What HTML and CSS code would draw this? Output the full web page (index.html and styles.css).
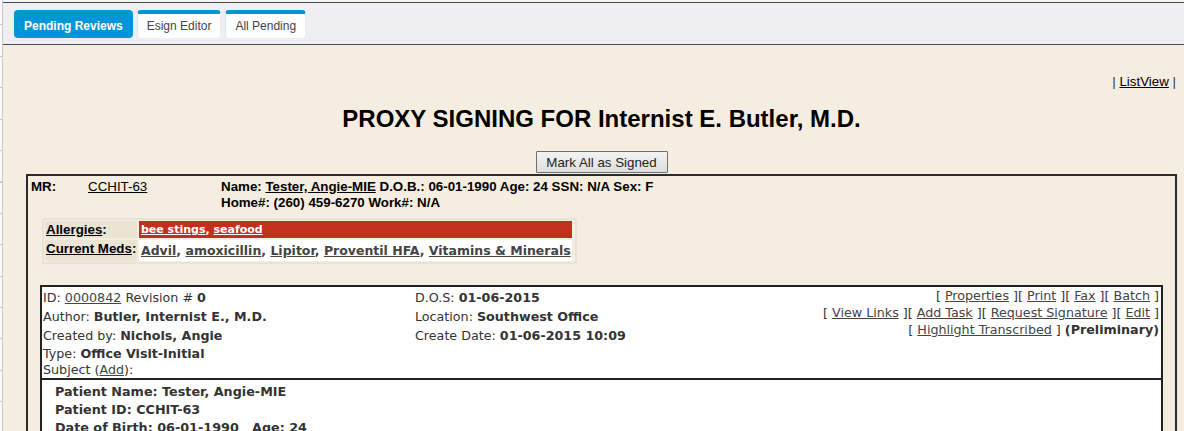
FILE: index.html
```html
<!DOCTYPE html>
<html>
<head>
<meta charset="utf-8">
<title>Pending Reviews</title>
<link rel="stylesheet" href="styles.css">
</head>
<body>
<div class="frame">
  <div class="gutter"></div>
  <div class="main">
    <nav class="tabbar">
      <a class="tab active">Pending Reviews</a>
      <a class="tab">Esign Editor</a>
      <a class="tab">All Pending</a>
    </nav>
    <div class="sheet">
      <div class="viewlinks">| <a class="plain-link">ListView</a> |</div>
      <h1 class="title">PROXY SIGNING FOR Internist E. Butler, M.D.</h1>
      <div class="actions"><button class="btn">Mark All as Signed</button></div>
      <div class="patient-box">
        <div class="demo">
          <b class="demo-label">MR:</b>
          <a class="plain-link mr-link">CCHIT-63</a>
          <div class="demo-name">
            <div>Name: <a class="plain-link">Tester, Angie-MIE</a> D.O.B.: 06-01-1990 Age: 24 SSN: N/A Sex: F</div>
            <div>Home#: (260) 459-6270 Work#: N/A</div>
          </div>
        </div>
        <div class="clinical">
          <div class="clin-label"><a class="plain-link">Allergies</a>:</div>
          <div class="clin-value allergy"><a class="allergy-link">bee stings</a>, <a class="allergy-link">seafood</a></div>
          <div class="clin-label"><a class="plain-link">Current Meds</a>:</div>
          <div class="clin-value meds"><a class="med-link">Advil</a>, <a class="med-link">amoxicillin</a>, <a class="med-link">Lipitor</a>, <a class="med-link">Proventil HFA</a>, <a class="med-link">Vitamins &amp; Minerals</a></div>
        </div>
        <div class="doc">
          <div class="doc-head">
            <div class="col">
              <div class="row">ID: <a class="doc-link">0000842</a> Revision # <b>0</b></div>
              <div class="row">Author: <b>Butler, Internist E., M.D.</b></div>
              <div class="row">Created by: <b>Nichols, Angie</b></div>
              <div class="row row-type">Type: <b>Office Visit-Initial</b></div>
              <div class="row row-subject">Subject (<a class="doc-link">Add</a>):</div>
            </div>
            <div class="col">
              <div class="row">D.O.S: <b>01-06-2015</b></div>
              <div class="row">Location: <b>Southwest Office</b></div>
              <div class="row">Create Date: <b>01-06-2015 10:09</b></div>
            </div>
            <div class="col col-actions">
              <div class="act-row">[ <a class="doc-link">Properties</a> ][ <a class="doc-link">Print</a> ][ <a class="doc-link">Fax</a> ][ <a class="doc-link">Batch</a> ]</div>
              <div class="act-row">[ <a class="doc-link">View Links</a> ][ <a class="doc-link">Add Task</a> ][ <a class="doc-link">Request Signature</a> ][ <a class="doc-link">Edit</a> ]</div>
              <div class="act-row">[ <a class="doc-link">Highlight Transcribed</a> ] <b>(Preliminary)</b></div>
            </div>
          </div>
          <div class="doc-body">
            <div>Patient Name: Tester, Angie-MIE</div>
            <div>Patient ID: CCHIT-63</div>
            <div>Date of Birth: 06-01-1990&nbsp;&nbsp; Age: 24</div>
          </div>
        </div>
      </div>
    </div>
  </div>
</div>
</body>
</html>
```
FILE: styles.css
```css
html, body {
  margin: 0;
  padding: 0;
  height: 100%;
  overflow: hidden;
}
body {
  font-family: "Liberation Sans", Arial, sans-serif;
  font-size: 13.33px;
  color: #000;
  background: #f5eddf;
}
.frame {
  display: flex;
  height: 100vh;
}
.gutter {
  width: 2px;
  flex: none;
  border-right: 1px solid #c9c9c9;
  background-color: #fafafa;
  background-image: repeating-linear-gradient(to bottom, #fafafa 0, #fafafa 24.5px, #c9c9c9 24.5px, #c9c9c9 25.5px, #fafafa 25.5px, #fafafa 31.4px);
}
.main {
  flex: 1;
  min-width: 0;
  background: linear-gradient(#f4f4f4 0, #f4f4f4 2px, #f5eddf 2px);
}
.tabbar {
  margin-top: 2px;
  display: flex;
  gap: 4px;
  padding: 7px 0 6px 11px;
  background: #efeff3;
  border-top: 1px solid #4a4a4a;
  border-bottom: 1px solid #4a4a4a;
}
.tab {
  box-sizing: border-box;
  height: 28px;
  line-height: 24px;
  padding: 0 9px;
  font-size: 12px;
  color: #444;
  background: #fff;
  border-top: 4px solid #0096d6;
  border-left: 1px solid #d6eaf5;
  border-right: 1px solid #e6eef4;
  border-radius: 4px 4px 3px 3px;
}
.tab.active {
  background: #0096d6;
  color: #fff;
  font-weight: bold;
  border-left: 0;
  border-right: 0;
  border-radius: 4px;
  padding: 0 10px;
}
.sheet {
  margin: 0 7px 0 23px;
}
.viewlinks {
  margin-top: 29px;
  line-height: 16px;
  text-align: right;
  padding-right: 1px;
  color: #333;
}
.plain-link {
  color: #000;
  text-decoration: underline;
}
.title {
  margin: 15px 0 0;
  font-size: 24px;
  line-height: 28px;
  font-weight: bold;
  text-align: center;
}
.actions {
  margin-top: 18px;
  display: flex;
  justify-content: center;
}
.btn {
  box-sizing: border-box;
  height: 22px;
  width: 132px;
  padding: 0;
  font-family: "Liberation Sans", Arial, sans-serif;
  font-size: 13.33px;
  color: #222;
  background: linear-gradient(#f3f3f3, #dedede);
  border: 1px solid #707070;
  border-radius: 1px;
}
.patient-box {
  margin-top: 1px;
  border: 2px solid #2b2b2b;
  padding-bottom: 40px;
}
.demo {
  display: grid;
  grid-template-columns: 57px 133px auto;
  padding: 3px 0 0 3px;
  line-height: 16px;
}
.demo-label {
  font-weight: bold;
}
.mr-link {
  justify-self: start;
  align-self: start;
}
.demo-name {
  font-weight: bold;
}
.clinical {
  margin: 7px 0 0 14px;
  width: 529px;
  display: grid;
  grid-template-columns: 92px 433px;
  grid-template-rows: 17px 21px;
  gap: 2px;
  padding: 1px;
  border: 2px solid #e7e3db;
}
.clin-label {
  background: #ebe3d3;
  font-weight: bold;
  line-height: 17px;
  padding-left: 1px;
  white-space: nowrap;
}
.clin-value {
  font-family: "DejaVu Sans", Verdana, sans-serif;
  font-weight: bold;
  padding-left: 2px;
  white-space: nowrap;
  overflow: hidden;
}
.allergy {
  background: #c0301c;
  color: #fff;
  font-size: 11px;
  line-height: 17px;
}
.allergy-link {
  color: #fff;
  text-decoration: underline;
}
.meds {
  background: #fff;
  color: #444;
  font-size: 12.5px;
  line-height: 21px;
}
.med-link {
  color: #444;
  text-decoration: underline;
}
.doc {
  margin: 21px 12px 0;
  border: 2px solid #222;
  background: #fff;
}
.doc-head {
  display: grid;
  grid-template-columns: 372px auto 1fr;
  padding: 0 2px 2px 1px;
  border-bottom: 2px solid #222;
  font-family: "DejaVu Sans", Verdana, sans-serif;
  font-size: 12.7px;
  color: #333;
}
.col {
  padding-top: 1px;
}
.row {
  line-height: 19px;
  white-space: nowrap;
}
.row-type {
  line-height: 18px;
}
.row-subject {
  line-height: 13px;
}
.col-actions {
  padding-top: 0;
  text-align: right;
}
.act-row {
  line-height: 17px;
  white-space: nowrap;
}
.doc-link {
  color: #444;
  text-decoration: underline;
}
.doc-body {
  padding: 3px 13px 0;
  font-family: "DejaVu Sans", Verdana, sans-serif;
  font-size: 12.75px;
  font-weight: bold;
  line-height: 18px;
  color: #333;
}
```
